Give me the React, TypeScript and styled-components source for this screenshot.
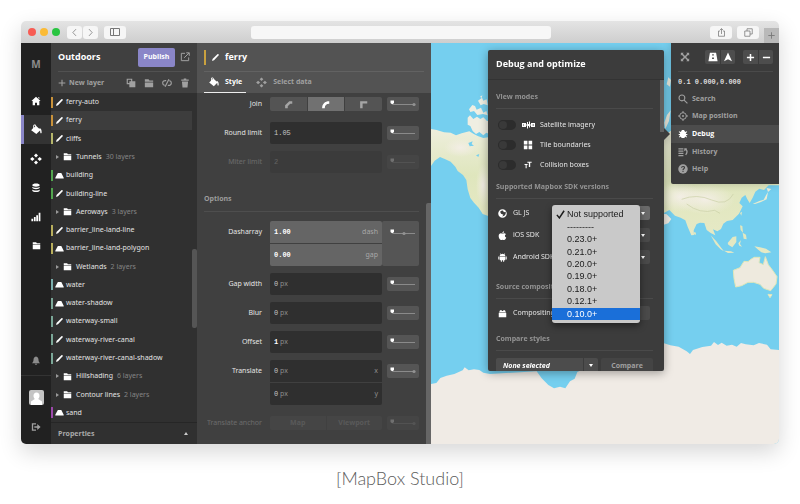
import React from "react";
import styled, { createGlobalStyle } from "styled-components";

const heading = '700 7px/10px "Open Sans", "Noto Sans", sans-serif';

const GlobalStyle = createGlobalStyle`
  * { box-sizing: border-box; }
  body {
    margin: 0;
    background: #fff;
    font: 7px/10px "Noto Sans", "Open Sans", sans-serif;
    color: #e4e4e4;
  }
  button, input, select { font: inherit; color: inherit; margin: 0; padding: 0; border: 0; background: none; }
  ul { list-style: none; margin: 0; padding: 0; }
  h1, h2, p, figure { margin: 0; padding: 0; font-weight: inherit; font-size: inherit; }
  svg { display: block; flex: none; }
`;

/* ---------- icons ---------- */

const icons: Record<string, React.ReactNode> = {
  line: <path d="M1.5 10.5 2 8 8.5 1.6Q10 1 10.6 2.8L4 9.8Z" />,
  polygon: <path d="M3.8 2.5h4.6L11.6 9v1H.4V9Z" />,
  folder: <path d="M1 1.5h4.5l1 1.5H11v1.5H1ZM1 5.3h10V11H1Z" />,
  home: <path d="M6 1 11.5 6H10v5H7.2V8H4.8v3H2V6H.5ZM8.6 1.5H10v2l-1.4-1Z" />,
  paint: <path fillRule="evenodd" d="M4 .5c1 0 1.7.7 1.7 1.6L9 5.3l.7-.6c1.5.6 2 2 1.9 4.8-.2 1-1.3.9-1.4 0L9.9 7 5.8 11 1 7.3.2 6.7l2.200-2.300V2.100C2.400 1.200 3 .5 4 .5Zm0 1c-.5 0-.7.3-.7.8v1.400L4.800 2.200c0-.4-.3-.7-.8-.7Z" />,
  data: <path d="M6 .6 8 2.500 6 4.400 4 2.500ZM6 7.600 8 9.500 6 11.400 4 9.500ZM2.300 4 4.500 6 2.300 8 .1 6ZM9.700 4l2.200 2-2.200 2-2.200-2Z" />,
  stack: <path d="M1.500 2.500C1.500 0 10.500 0 10.500 2.500S1.500 5 1.500 2.500ZM1.500 4.500c1.500 1.600 7.500 1.600 9 0v1C10 8 2 8 1.500 5.500ZM1.500 7.700c1.500 1.600 7.500 1.600 9 0v1.200c-.5 2.700-8.500 2.700-9 0Z" />,
  chart: <path d="M.5 8h2.100v3H.5ZM3.500 6h2.100v5H3.500ZM6.300 4h2.100v7H6.300ZM9.200 1h2.100v10H9.200Z" />,
  bell: <path d="M6 .6c2.200.4 3 2 3 4 0 2 .7 3 1.800 4H1.200C2.300 7.600 3 6.600 3 4.600c0-2 .8-3.600 3-4ZM4.500 9.300h3C7.300 11 4.700 11 4.500 9.300Z" />,
  logout: <path d="M1 1.500h5V3H2.600v6H6v1.500H1ZM7.500 2.500 11.500 6 7.500 9.500V7H4V5h3.500Z" />,
  external: <path fill="none" stroke="currentColor" strokeWidth="1.200" d="M6 1.600H1.600v8.800h8.800V6.500M7.500 1h3.600v3.600M11 1 5 7" />,
  plus: <path d="M5.200 1h1.600v4.200H11v1.600H6.800V11H5.200V6.800H1V5.200h4.200Z" />,
  boldPlus: <path d="M5 1.200h2V5h3.800v2H7v3.800H5V7H1.200V5H5Z" />,
  minus: <path d="M1.200 5h9.600v2H1.200Z" />,
  copy: <path fillRule="evenodd" d="M.8.8h6.700v3.200h3.700v7.200H4V7.500H.8ZM2.200 2.200v3.900H4V4h2.100V2.200Z" />,
  hide: <path fill="none" stroke="currentColor" strokeWidth="1.400" d="M5 3.200C2.600 2.800.8 4 .8 6c0 1.500 1 2.600 2.400 2.800M7 8.800C9.400 9.200 11.200 8 11.200 6c0-1.500-1-2.600-2.400-2.800M8.300 1.500 3.700 10.500" />,
  trash: <path d="M4.500.6h3v1.200h3v1.500h-9V1.800h3ZM2.300 4.100h7.400L9 11.400H3Z" />,
  close: <path d="M1 1h3.500L3.400 2.100 6 4.700l2.600-2.600L7.500 1H11v3.500L9.900 3.400 7.300 6l2.600 2.600L11 7.500V11H7.500l1.100-1.100L6 7.300 3.400 9.900 4.500 11H1V7.500l1.100 1.100L4.700 6 2.100 3.400 1 4.500Z" />,
  road: <path fillRule="evenodd" d="M2.300.8h7.400L11.500 11H.5ZM5 2.600v1.600h2V2.600ZM4.900 6.600v1.900h2.200V6.600Z" />,
  north: <path d="M6 .7 10.800 11 6 8.700 1.200 11Z" />,
  search: <g fill="none" stroke="currentColor" strokeWidth="1.300"><circle cx="4.700" cy="4.700" r="3.500" /><path d="m7.300 7.300 4 4" /></g>,
  target: <g fill="none" stroke="currentColor" strokeWidth="1.200"><circle cx="6" cy="6" r="4" /><path d="M6 0v2.400M6 9.600V12M0 6h2.400M9.600 6H12" /><circle cx="6" cy="6" r=".8" /></g>,
  bug: <path d="M4 2.600C4 .6 8 .6 8 2.600l1.200 1 1.300-.9.600 1-1.600 1.200v1.200h1.700v1H9.500l1.300 2.500-.9.600-1-1.200C8 11.500 4 11.500 3.100 9l-1 1.200-.9-.6 1.300-2.500H.8v-1h1.700V4.900L.9 3.700l.6-1 1.300.9Z" />,
  history: <path d="M.5 1.500h6V3h-6ZM.5 4.200h6v1.500h-6ZM.5 6.900h6v1.500h-6ZM.5 9.500h6V11h-6ZM7.500 1.500h3v1.300Q13 6 9.800 9.800L8.600 9q2.400-3 .8-5.200L7.500 5Z" />,
  help: <><circle cx="6" cy="6" r="5.700" /><path fill="none" stroke="#3d3d3d" strokeWidth="1.300" d="M4.200 4.600C4.300 2.300 7.900 2.500 7.800 4.500 7.700 5.800 6 5.600 6 7.200M6 8.100v1.400" /></>,
  tiles: <path d="M1 1h4.300v4.300H1ZM6.700 1H11v4.300H6.700ZM1 6.700h4.300V11H1ZM6.700 6.700H11V11H6.700Z" />,
  letters: <path d="M.8 4.600h4.600v1.500H4V11H2.400V6.100H.8ZM5 1h6.500v1.800H9.300V9H7.300V2.800H5Z" />,
  compass: <path fillRule="evenodd" d="M6 .3a5.700 5.700 0 1 0 0 11.400A5.700 5.700 0 1 0 6 .3ZM6.500 2l1.400 2.400 2.300-.6C11 7.500 8.500 10 5.500 10l1.800-2.400L4 6.200 2.800 3.600Q4.500 1.900 6.500 2Z" />,
  apple: <path d="M8.100.2C8.200 1.800 7 2.900 5.800 2.900 5.700 1.500 6.900.4 8.100.2ZM6 3.600c.8 0 1.300-.6 2.300-.6 1 0 1.800.5 2.300 1.200C8.500 5.500 8.900 8 11 8.800 10.300 10.700 9.300 11.900 8.300 11.900 7.500 11.900 7 11.500 6.100 11.500S4.700 11.900 3.900 11.900C2.200 11.700.8 8.800.9 6.500 1 4.400 2.300 3.100 3.900 3.100 4.800 3.100 5.400 3.600 6 3.600Z" />,
  android: <path d="m3 .4 1 1.100q2-.7 4 0L9 .4l.5.400-.8 1.100Q9.700 2.700 9.800 4H2.200Q2.300 2.700 3.300 1.900L2.500.8ZM2.400 4.600h7.200v5H8.200v2H6.800v-2H5.200v2H3.800v-2H2.400ZM.4 4.600h1.400v4H.4ZM10.200 4.600h1.400v4h-1.400Z" />,
  box: <path d="M2.500 1.500h2.600v1.200h1.800V1.500h2.600v1.200L11 4.700H1l1.500-2ZM1 5.400h10V11H1Z" />,
  left: <path fill="none" stroke="currentColor" d="M8 1.500 3.800 6 8 10.500" />,
  right: <path fill="none" stroke="currentColor" d="M4 1.500 8.200 6 4 10.500" />,
  share: <path fill="none" stroke="currentColor" d="M4 4H2v7h8V4H8M6 8V1M4 2.700 6 .8l2 1.900" />,
  tabs: <path fill="none" stroke="currentColor" d="M1 4h7v7H1ZM4 4V1h7v7H8" />,
  thinPlus: <path fill="none" stroke="currentColor" strokeWidth="1.500" d="M6 .5v11M.5 6h11" />,
  bevel: <path d="M1.500 11V7L7 1.500h4V5H8.300L5 8.300V11Z" />,
  round: <path d="M1.500 11C1.500 5 5 1.500 11 1.500V5C7 5 5 7 5 11Z" />,
  miter: <path d="M1.500 11V1.500H11V4.800H4.800V11Z" />,
  check: <path fill="none" stroke="currentColor" strokeWidth="2" d="m1.200 6.500 3.300 4L10.800 1" />,
};

const Svg = styled.svg<{ $size: number; $color?: string }>`
  width: ${(p) => p.$size}px;
  height: ${(p) => p.$size}px;
  color: ${(p) => p.$color ?? "inherit"};
  fill: currentColor;
`;
const Icon = ({ name, size = 10, color }: { name: string; size?: number; color?: string }) => (
  <Svg viewBox="0 0 12 12" $size={size} $color={color} aria-hidden="true">{icons[name]}</Svg>
);

/* ---------- window ---------- */

const Page = styled.figure`
  min-height: 100vh;
  display: flex;
  flex-direction: column;
  padding: 21px 21px 0;
`;
const Window = styled.main`
  flex: 1;
  display: flex;
  flex-direction: column;
  border-radius: 5px;
  overflow: hidden;
  box-shadow: 0 8px 22px rgba(0, 0, 0, 0.16);
`;
const TitleBar = styled.header`
  display: flex;
  align-items: center;
  height: 22px;
  padding-left: 7px;
  background: linear-gradient(#e4e4e4, #cecece);
  color: #777;
`;
const Light = styled.span<{ $color: string }>`
  width: 8px;
  height: 8px;
  margin-right: 4px;
  border-radius: 50%;
  background: ${(p) => p.$color};
`;
const ChromeButton = styled.button<{ $wide?: boolean }>`
  display: grid;
  place-items: center;
  width: ${(p) => (p.$wide ? 22 : 15)}px;
  height: 13px;
  border-radius: 3px;
  background: #f6f6f6;
`;
const ChromeGroup = styled.div<{ $gap: number }>`
  display: flex;
  gap: ${(p) => p.$gap}px;
  margin-left: 3px;
`;
const SidebarButton = styled(ChromeButton)`
  margin-left: 6px;
`;
const Address = styled.input`
  flex: 1;
  min-width: 0;
  height: 13px;
  margin: 0 156px 0 125px;
  border-radius: 3px;
  background: #f7f7f7;
`;
const NewTab = styled.button`
  display: grid;
  place-items: center;
  align-self: flex-end;
  width: 15px;
  height: 15px;
  margin-left: 5px;
  background: #b9b9b9;
`;
const Body = styled.div`
  flex: 1;
  display: grid;
  grid-template-columns: 30px 146px 234px minmax(0, 1fr);
`;
const Caption = styled.figcaption`
  height: 60px;
  padding-top: 21px;
  text-align: center;
  color: #5c5c5c;
  font: 300 18px/26px Lato, sans-serif;
`;

/* ---------- rail ---------- */

const Rail = styled.nav`
  display: flex;
  flex-direction: column;
  background: #212121;
`;
const Brand = styled.a`
  height: 43px;
  line-height: 43px;
  text-align: center;
  text-decoration: none;
  color: #8c8c8c;
  font-size: 10px;
  font-weight: 700;
`;
const RailButton = styled.button<{ $active?: boolean; $dim?: boolean }>`
  display: grid;
  place-items: center;
  height: 29px;
  padding-right: ${(p) => (p.$active ? 3 : 0)}px;
  border-left: ${(p) => (p.$active ? "3px solid #8a86c8" : "0")};
  background: ${(p) => (p.$active ? "#333" : "none")};
  color: ${(p) => (p.$dim ? "#8c8c8c" : "#fff")};
`;
const RailFoot = styled.div`
  display: grid;
  justify-items: center;
  align-content: start;
  gap: 17px;
  height: 69px;
  padding-top: 14px;
  border-top: 1px solid #333;
`;
const RailBell = styled(RailButton)`
  margin-top: auto;
`;
const AvatarBox = styled.svg`
  width: 15px;
  height: 15px;
  border-radius: 2px;
`;
const PlainButton = styled.button`
  display: grid;
  place-items: center;
  color: #a0a0a0;
`;

/* ---------- layers ---------- */

const Layers = styled.section`
  display: flex;
  flex-direction: column;
  background: #303030;
`;
const PanelHead = styled.div<{ $color: string }>`
  height: 50px;
  padding: 0 7px;
  background: ${(p) => p.$color};
`;
const HeadRow = styled.div<{ $last?: boolean }>`
  display: flex;
  align-items: center;
  gap: 5px;
  height: ${(p) => (p.$last ? 21 : 29)}px;
  border-bottom: ${(p) => (p.$last ? "0" : "1px solid rgba(255,255,255,.09)")};
`;
const Title = styled.h1`
  color: #fff;
  font: ${heading};
  font-size: 9px;
  line-height: 12px;
`;
const Publish = styled.button`
  height: 19px;
  width: 37px;
  margin-left: auto;
  border-radius: 2px;
  background: #8a86c8;
  color: #fff;
  font: ${heading};
`;
const NewLayer = styled.button`
  display: flex;
  align-items: center;
  gap: 3px;
  margin-right: auto;
  color: #a0a0a0;
  font: ${heading};
`;
const HeadTools = styled.div`
  display: flex;
  gap: 8px;
`;
const ListArea = styled.div`
  flex: 1;
  display: grid;
  grid-template-columns: 1fr 5px;
`;
const LayerList = styled.ul`
  display: grid;
  grid-auto-rows: 1fr;
`;
const LayerItem = styled.li`
  display: flex;
`;
const LayerButton = styled.button<{ $bar?: string; $active?: boolean }>`
  flex: 1;
  display: flex;
  align-items: center;
  gap: ${(p) => (p.$bar ? 2 : 4)}px;
  padding-left: ${(p) => (p.$bar ? 0 : 5)}px;
  white-space: nowrap;
  background: ${(p) => (p.$active ? "#3d3d3d" : "none")};
`;
const Bar = styled.span<{ $color: string; $tall?: boolean }>`
  flex: none;
  width: 2px;
  height: ${(p) => (p.$tall ? 15 : 11)}px;
  background: ${(p) => p.$color};
`;
const Muted = styled.span`
  color: #858585;
`;
const Triangle = styled.span<{ $dir: "right" | "down" | "up" }>`
  flex: none;
  width: 0;
  height: 0;
  border: 2px solid transparent;
  ${(p) =>
    p.$dir === "right"
      ? "border-left: 3px solid #999; border-right: 0;"
      : p.$dir === "down"
      ? "border-top: 3px solid #fff; border-bottom: 0;"
      : "border-bottom: 3px solid #ccc; border-top: 0;"}
`;
const LayerThumb = styled.span`
  align-self: end;
  height: 79px;
  margin-bottom: 94px;
  border-radius: 2px;
  background: #555;
`;
const Properties = styled.button`
  display: flex;
  align-items: center;
  justify-content: space-between;
  height: 22px;
  padding: 0 9px 0 7px;
  border-top: 1px solid #262626;
  color: #aaa;
  font: ${heading};
`;

/* ---------- style editor ---------- */

const Editor = styled.section`
  display: flex;
  flex-direction: column;
  background: #404040;
`;
const Tab = styled.button<{ $active?: boolean }>`
  display: flex;
  align-items: center;
  gap: 6px;
  height: 21px;
  padding: 0 4px 0 5px;
  border-bottom: 1px solid ${(p) => (p.$active ? "#eee" : "transparent")};
  color: ${(p) => (p.$active ? "#fff" : "#a0a0a0")};
  font: ${heading};
`;
const EditorArea = styled.div`
  flex: 1;
  display: grid;
  grid-template-columns: 1fr 5px;
`;
const EditorThumb = styled.span`
  margin-top: 110px;
  background: #666;
  border-radius: 2px 0 0 0;
`;
const Fields = styled.div`
  display: flex;
  flex-direction: column;
  gap: 7px;
  padding: 4px 7px 0;
`;
const Spacer = styled.div`
  height: 4px;
  margin-bottom: -7px;
`;
const FieldRow = styled.div<{ $faded?: boolean }>`
  display: grid;
  grid-template-columns: 61px 112px 32px;
  column-gap: 5px;
  opacity: ${(p) => (p.$faded ? 0.25 : 1)};
`;
const FieldLabel = styled.span<{ $short?: boolean }>`
  display: flex;
  justify-content: flex-end;
  padding-right: 3px;
  line-height: ${(p) => (p.$short ? 14 : 22)}px;
  white-space: nowrap;
`;
const Inputs = styled.div`
  display: grid;
  gap: 1px;
  border-radius: 2px;
  overflow: hidden;
`;
const ValueBox = styled.label<{ $light?: boolean }>`
  display: flex;
  align-items: center;
  height: 22px;
  padding: 0 4px;
  background: ${(p) => (p.$light ? "#656565" : "#2f2f2f")};
  color: ${(p) => (p.$light ? "#a8a8a8" : "#8c8c8c")};
`;
const ValueInput = styled.input<{ $chars: number; $bold?: boolean }>`
  width: ${(p) => (p.$chars > 1 ? 30 : 6)}px;
  height: 14px;
  color: ${(p) => (p.$bold ? "#fff" : "#c4c4c4")};
  font: ${(p) => (p.$bold ? 700 : 400)} 7px/14px "Liberation Mono", monospace;
`;
const Suffix = styled.span`
  margin-left: auto;
`;
const Segments = styled.div`
  display: grid;
  grid-auto-flow: column;
  grid-auto-columns: 1fr;
  gap: 1px;
  height: 14px;
  border-radius: 2px;
  overflow: hidden;
`;
const Segment = styled.button<{ $active?: boolean }>`
  display: grid;
  place-items: center;
  background: ${(p) => (p.$active ? "#717171" : "#545454")};
  color: ${(p) => (p.$active ? "#fff" : "#a5a5a5")};
  font: ${heading};
`;
const StopButton = styled.button<{ $offset?: boolean; $tall?: boolean }>`
  display: grid;
  justify-items: end;
  align-content: start;
  height: ${(p) => (p.$tall ? 45 : 14)}px;
  padding: ${(p) => (p.$tall ? 5 : 0)}px 3px 0 0;
  margin: ${(p) => (p.$offset ? "4px 0 0" : p.$tall ? "0 0 0 -5px" : "0")};
  border-radius: 2px;
  background: #555;
`;
const StopSvg = styled.svg`
  width: 26px;
  height: 14px;
`;
const SectionTitle = styled.h2`
  padding: 14px 0 7px;
  margin-bottom: 2px;
  border-bottom: 1px solid #4e4e4e;
  color: #9c9c9c;
  font: ${heading};
`;

const Stops = ({ label, kind, offset, tall }: { label: string; kind?: "end" | "mid"; offset?: boolean; tall?: boolean }) => (
  <StopButton aria-label={`${label} zoom function`} $offset={offset} $tall={tall}>
    <StopSvg viewBox="0 0 26 14">
      <path d="M3 7.500h22" stroke="#8a8a8a" />
      <path d="M.5 3.500h3.500v2.500L2.250 7.500.5 6Z" fill="#fff" />
      {kind && <circle cx={kind === "end" ? 24 : 14} cy="7.500" r="1.600" fill="#929292" />}
    </StopSvg>
  </StopButton>
);

type Value = { value: string; unit?: string; suffix?: string };
const NumberField = ({ label, values, faded, kind, light }: { label: string; values: Value[]; faded?: boolean; kind?: "end" | "mid"; light?: boolean }) => (
  <FieldRow $faded={faded}>
    <FieldLabel>{label}</FieldLabel>
    <Inputs>
      {values.map((v, i) => (
        <ValueBox key={i} $light={light}>
          <ValueInput aria-label={`${label} ${v.suffix ?? ""}`} defaultValue={v.value} $chars={v.value.length} $bold={light || v.value === "1"} disabled={faded} />
          {v.unit}
          {v.suffix && <Suffix>{v.suffix}</Suffix>}
        </ValueBox>
      ))}
    </Inputs>
    <Stops label={label} kind={kind} offset={!light} tall={light} />
  </FieldRow>
);

/* ---------- map ---------- */

const MapArea = styled.section`
  position: relative;
  overflow: hidden;
  background: #75cfef;
`;
const MapSvg = styled.svg`
  position: absolute;
  inset: 0;
  width: 100%;
  height: 100%;
`;
const Tools = styled.aside`
  position: absolute;
  top: 0;
  right: 0;
  width: 108px;
  padding-bottom: 6px;
  border-radius: 0 0 0 2px;
  background: #3b3b3b;
  box-shadow: 0 0 8px rgba(0, 0, 0, 0.2);
`;
const ToolRow = styled.div`
  display: flex;
  align-items: center;
  height: 29px;
  margin: 0 6px 5px 7px;
  padding-left: 2px;
  border-bottom: 1px solid #4a4a4a;
`;
const ToolPair = styled.div`
  display: grid;
  grid-template-columns: 15px 14px;
  gap: 1px;
  height: 14px;
  margin-left: auto;
  border-radius: 2px;
  overflow: hidden;
  & + & { margin-left: 8px; }
`;
const ToolButton = styled.button`
  display: grid;
  place-items: center;
  background: #4d4d4d;
  color: #fff;
`;
const Coords = styled.p`
  padding-left: 7px;
  color: #ddd;
  font: 700 7px/10px "Liberation Mono", monospace;
`;
const ToolList = styled.ul`
  display: grid;
  grid-template-rows: repeat(5, 1fr);
  height: 88px;
  margin-top: 3px;
`;
const ToolItem = styled.button<{ $active?: boolean }>`
  display: flex;
  align-items: center;
  gap: 4px;
  width: 100%;
  height: 100%;
  padding-left: 7px;
  background: ${(p) => (p.$active ? "#4c4c4c" : "none")};
  color: ${(p) => (p.$active ? "#fff" : "#a0a0a0")};
  font: ${heading};
`;

/* ---------- debug panel ---------- */

const Popover = styled.section`
  position: absolute;
  top: 7px;
  right: 115px;
  width: 176px;
  height: 321px;
  filter: drop-shadow(0 2px 5px rgba(0, 0, 0, 0.35));
  &::after {
    content: "";
    position: absolute;
    left: 100%;
    top: 78px;
    border: 6px solid transparent;
    border-left: 6px solid #3c3c3c;
    border-right: 0;
  }
`;
const PopoverBody = styled.div`
  height: 100%;
  overflow: hidden;
  border-radius: 2px;
  background: #3c3c3c;
`;
const PopoverTitle = styled.h1`
  height: 30px;
  padding-left: 8px;
  border-bottom: 1px solid #333;
  color: #fff;
  font: ${heading};
  font-size: 9px;
  line-height: 28px;
`;
const PopoverScroll = styled.div`
  display: grid;
  grid-template-columns: 1fr 4px;
`;
const PopoverThumb = styled.span`
  height: 52px;
  background: #606060;
`;
const PopoverContent = styled.div`
  padding: 12px 7px 0 8px;
`;
const Group = styled.h2<{ $gap: number }>`
  margin-top: ${(p) => p.$gap}px;
  padding-bottom: 6px;
  border-bottom: 1px solid #4a4a4a;
  color: #949494;
  font: ${heading};
`;
const Modes = styled.div`
  display: grid;
  gap: 2px;
  padding-top: 7px;
`;
const Mode = styled.label`
  display: grid;
  grid-template-columns: 18px 14px 1fr;
  align-items: center;
  justify-items: center;
  column-gap: 5px;
  height: 18px;
  padding-left: 2px;
`;
const ModeText = styled.span`
  justify-self: start;
`;
const Toggle = styled.input`
  appearance: none;
  display: flex;
  width: 18px;
  height: 10px;
  border-radius: 5px;
  background: #2c2c2c;
  &::before {
    content: "";
    width: 8px;
    height: 8px;
    margin: 1px;
    border-radius: 50%;
    background: #393939;
  }
`;
const Sdk = styled.label`
  display: grid;
  grid-template-columns: 9px 34px 1fr;
  align-items: center;
  column-gap: 6px;
  height: 22px;
  padding: 0 3px 0 2px;
  white-space: nowrap;
`;
const SelectWrap = styled.span<{ $light?: boolean }>`
  display: flex;
  align-items: center;
  height: 14px;
  margin-left: 4px;
  padding-right: 5px;
  border-radius: 2px;
  background: ${(p) => (p.$light ? "#6a6a6a" : "#4a4a4a")};
`;
const Select = styled.select`
  appearance: none;
  flex: 1;
  min-width: 0;
  height: 14px;
  padding-left: 7px;
`;
const SdkList = styled.div`
  position: relative;
  padding-top: 3px;
`;
const Menu = styled.ul`
  position: absolute;
  z-index: 2;
  top: 6px;
  left: 56px;
  width: 88px;
  height: 118px;
  display: grid;
  grid-auto-rows: 1fr;
  padding: 3px 0;
  border-radius: 3px;
  background: #c9c9c9;
  box-shadow: 0 3px 7px rgba(0, 0, 0, 0.45);
`;
const MenuItem = styled.li<{ $active?: boolean }>`
  display: grid;
  grid-template-columns: 9px 1fr;
  align-items: center;
  column-gap: 2px;
  padding-left: 4px;
  background: ${(p) => (p.$active ? "#1a6fd9" : "none")};
  color: ${(p) => (p.$active ? "#fff" : "#1b1b1b")};
  font: 9px/12px "Liberation Sans", sans-serif;
`;
const CompareRow = styled.div`
  display: grid;
  grid-template-columns: 1fr 52px;
  gap: 3px;
  padding-top: 7px;
`;
const StyleSelect = styled.label`
  display: flex;
  align-items: center;
  height: 15px;
  padding-right: 5px;
  border-radius: 2px;
  background: linear-gradient(90deg, #4c4c4c 87px, #3c3c3c 87px 88px, #4c4c4c 88px);
  color: #fff;
  font: ${heading};
  font-style: italic;
`;
const Compare = styled.button`
  height: 15px;
  border-radius: 2px;
  background: #444;
  color: #a0a0a0;
  font: ${heading};
`;

/* ---------- content ---------- */

type Layer = { name: string; bar?: string; icon?: string; count?: string; active?: boolean };
const layers: Layer[] = [
  { name: "ferry-auto", bar: "#c9923a", icon: "line" },
  { name: "ferry", bar: "#c9923a", icon: "line", active: true },
  { name: "cliffs", bar: "#b5b56a", icon: "line" },
  { name: "Tunnels", count: "30 layers" },
  { name: "building", bar: "#52a54e", icon: "polygon" },
  { name: "building-line", bar: "#52a54e", icon: "line" },
  { name: "Aeroways", count: "3 layers" },
  { name: "barrier_line-land-line", bar: "#b8ae5c", icon: "line" },
  { name: "barrier_line-land-polygon", bar: "#b8ae5c", icon: "polygon" },
  { name: "Wetlands", count: "2 layers" },
  { name: "water", bar: "#7aaeac", icon: "polygon" },
  { name: "water-shadow", bar: "#7ba797", icon: "polygon" },
  { name: "waterway-small", bar: "#7ba797", icon: "line" },
  { name: "waterway-river-canal", bar: "#7ba797", icon: "line" },
  { name: "waterway-river-canal-shadow", bar: "#7ba797", icon: "line" },
  { name: "Hillshading", count: "6 layers" },
  { name: "Contour lines", count: "2 layers" },
  { name: "sand", bar: "#9c48aa", icon: "polygon" },
];
const tools = [
  ["search", "Search"],
  ["target", "Map position"],
  ["bug", "Debug"],
  ["history", "History"],
  ["help", "Help"],
];
const versions = ["Not supported", "---------", "0.23.0+", "0.21.0+", "0.20.0+", "0.19.0+", "0.18.0+", "0.12.1+", "0.10.0+"];
const sdks = [
  ["compass", "GL JS"],
  ["apple", "iOS SDK"],
  ["android", "Android SDK"],
];

const WideSvg = styled.svg`
  width: 13px;
  height: 8px;
  fill: #fff;
`;
const SatelliteIcon = () => (
  <WideSvg viewBox="0 0 26 16" aria-hidden="true">
    <path fillRule="evenodd" d="M0 4h8v3h2V2h2v4h2V1h2v6h2V4h8v8h-8V9h-2v4h-2v-3h-2v5h-2V9H8v3H0ZM2 6v1h2V6ZM2 9v1h2V9ZM21 6v1h3V6ZM21 9v1h3V9Z" />
  </WideSvg>
);
const SidebarSvg = styled.svg`
  width: 10px;
  height: 8px;
`;

const WorldMap = () => (
  <MapSvg viewBox="33 9 1044 1203" preserveAspectRatio="xMinYMin slice" aria-label="World map" role="img">
    <defs>
      <linearGradient id="land" x1="0" y1="0" x2="0" y2="1">
        <stop offset="0" stopColor="#eeeedc" />
        <stop offset=".5" stopColor="#dfe6bd" />
        <stop offset="1" stopColor="#e6e9c5" />
      </linearGradient>
      <radialGradient id="dry">
        <stop offset="0" stopColor="#f3eee5" />
        <stop offset="1" stopColor="#f3eee5" stopOpacity="0" />
      </radialGradient>
    </defs>
    <g fill="url(#land)">
      <path d="M33 267 50 270 72 277 92 278 108 286 125 280 148 274 160 281 173 288 190 294 215 290V545L203 527 188 522 176 503 162 488 151 474 143 448 139 420 129 405 113 393 106 380 92 365 76 358 60 351 44 362 33 378Z" />
      <path d="M143 233 150 226 160 237 171 230 181 237 190 232 201 243 215 244V285L199 278 190 286 178 276 168 282 158 273 151 258 143 254Z" fill="#efeee2" />
      <path d="M147 208 157 195 165 198 170 209 183 203 190 218 199 213 203 226 189 222 172 225 162 213 151 216ZM174 182l12-9 4 9 10-4 3 18-12-4-9 4ZM180 170l7-4-2 8Z" fill="#efeee2" />
      <path d="M720 305 742 280 770 260 1020 260 1077 300V436L1046 436 1032 450 1018 446 1006 455 998 473 989 489 982 478 976 465 965 473 958 489 968 499 957 521 938 540 921 543 910 551 903 567 892 574 879 568 886 586 872 579 860 570 853 549 840 548 830 552 821 571 822 585 814 586 803 560 796 541 782 533 765 527 748 510 733 518 720 512Z" />
      <path d="M720 520 740 523 754 537 745 550 720 558Z" fill="#f0ece3" />
      <path d="M733 248 741 225 752 211 747 243 736 267ZM740 133l5-21 8 8-3 20Z" fill="#efefe2" />
      <path d="M872 586 889 604 904 624 912 634 902 628 887 613ZM912 632 933 634 943 638 924 639ZM923 609 938 591 949 589 949 606 937 622 925 614ZM955 610l8-10-3 12 6 8-8-3ZM960 556l7 2 2 20-7-8ZM968 578l10 6 2 14-9-2ZM1003 619l17 3 18 4 16 11-18 3-12-3-11-9ZM998 492l20-9 13-4 7-13 6-10-4-12 14 3-10 9-4 22-17 8-18 6ZM822 576l6 2-1 7-5-2ZM960 519l6-4-2 12Z" />
      <path d="M940 691 960 683 972 664 984 665 994 657 1003 652 1020 652 1017 668 1030 674 1036 650 1045 674 1060 694 1071 710 1068 732 1052 752 1031 745 1020 733 1001 727 984 727 965 737 947 741 942 716ZM1044 763l12 1-6 9Z" fill="#eeeade" stroke="#e0e7b9" strokeWidth="3" />
    </g>
    <g fill="url(#dry)">
      <ellipse cx="122" cy="323" rx="50" ry="28" />
      <ellipse cx="780" cy="470" rx="65" ry="45" />
      <ellipse cx="855" cy="478" rx="90" ry="45" />
      <ellipse cx="190" cy="435" rx="22" ry="65" />
    </g>
    <path d="M145 309l13-5-3 8 7 5-13 2ZM168 346l10-4-3 9Z" fill="#75cfef" />
    <path d="M785 478Q830 460 875 480T940 462M800 492Q840 523 884 511L900 520" fill="none" stroke="#c8cea4" strokeWidth="2" />
    <path d="M33 1032 49 1029 61 1014 80 1007 103 1002 128 991 134 982 146 991 162 988 178 990 190 998 210 1002 350 994 365 1015 385 1035 402 1045 420 1040 436 1045 450 1024 464 1016 472 996 550 960 650 910 732 910 751 916 776 920 800 934 810 942 819 930 847 921 873 917 882 906 894 915 905 908 920 917 936 914 950 920 963 909 977 913 1001 916 1017 909 1041 914 1052 928 1077 930V1212H33Z" fill="#f0ebe5" />
  </MapSvg>
);

export default function App() {
  return (
    <Page>
      <GlobalStyle />
      <Window>
        <TitleBar>
          <Light $color="#f75c54" />
          <Light $color="#fbbb36" />
          <Light $color="#29c541" />
          <ChromeGroup $gap={1}>
            <ChromeButton aria-label="Back"><Icon name="left" size={9} /></ChromeButton>
            <ChromeButton aria-label="Forward"><Icon name="right" size={9} /></ChromeButton>
          </ChromeGroup>
          <SidebarButton $wide aria-label="Sidebar">
            <SidebarSvg viewBox="0 0 10 8"><path d="M.5.5h9v7h-9ZM3.500.5v7" fill="none" stroke="#777" /></SidebarSvg>
          </SidebarButton>
          <Address aria-label="Address" />
          <ChromeGroup $gap={5}>
            <ChromeButton $wide aria-label="Share"><Icon name="share" size={9} /></ChromeButton>
            <ChromeButton $wide aria-label="Tabs"><Icon name="tabs" size={9} /></ChromeButton>
          </ChromeGroup>
          <NewTab aria-label="New tab"><Icon name="thinPlus" size={7} /></NewTab>
        </TitleBar>

        <Body>
          <Rail>
            <Brand href="#home">M</Brand>
            <RailButton aria-label="Home"><Icon name="home" /></RailButton>
            <RailButton $active aria-label="Styles"><Icon name="paint" size={11} /></RailButton>
            <RailButton aria-label="Data"><Icon name="data" size={12} /></RailButton>
            <RailButton aria-label="Tilesets"><Icon name="stack" /></RailButton>
            <RailButton aria-label="Statistics"><Icon name="chart" /></RailButton>
            <RailButton aria-label="Projects"><Icon name="folder" size={9} /></RailButton>
            <RailBell $dim aria-label="Notifications"><Icon name="bell" /></RailBell>
            <RailFoot>
              <PlainButton aria-label="Account">
                <AvatarBox viewBox="0 0 15 15">
                  <path d="M0 0h15v15H0Z" fill="#c4c4c4" />
                  <path d="M7.500 2.500c2 0 3 1.500 3 3.300 0 1.400-.6 2.300-1.300 3.200L13 11.500V15H2v-3.500L5.800 9C5 8.200 4.500 7.200 4.500 5.800c0-1.800 1-3.300 3-3.300Z" fill="#fff" />
                </AvatarBox>
              </PlainButton>
              <PlainButton aria-label="Sign out"><Icon name="logout" /></PlainButton>
            </RailFoot>
          </Rail>

          <Layers>
            <PanelHead $color="#404040">
              <HeadRow>
                <Title>Outdoors</Title>
                <Publish>Publish</Publish>
                <PlainButton aria-label="Open preview"><Icon name="external" /></PlainButton>
              </HeadRow>
              <HeadRow $last>
                <NewLayer><Icon name="plus" size={8} />New layer</NewLayer>
                <HeadTools>
                  <PlainButton aria-label="Duplicate"><Icon name="copy" /></PlainButton>
                  <PlainButton aria-label="Group"><Icon name="folder" /></PlainButton>
                  <PlainButton aria-label="Hide"><Icon name="hide" /></PlainButton>
                  <PlainButton aria-label="Delete"><Icon name="trash" /></PlainButton>
                </HeadTools>
              </HeadRow>
            </PanelHead>
            <ListArea>
              <LayerList>
                {layers.map((l) => (
                  <LayerItem key={l.name}>
                    <LayerButton $bar={l.bar} $active={l.active}>
                      {l.bar ? <Bar $color={l.bar} /> : <Triangle $dir="right" />}
                      <Icon name={l.icon ?? "folder"} size={9} color="#fff" />
                      {l.name}
                      {l.count && <Muted>{l.count}</Muted>}
                    </LayerButton>
                  </LayerItem>
                ))}
              </LayerList>
              <LayerThumb />
            </ListArea>
            <Properties>Properties<Triangle $dir="up" /></Properties>
          </Layers>

          <Editor>
            <PanelHead $color="#535353">
              <HeadRow>
                <Bar $color="#c9a13f" $tall />
                <Icon name="line" size={9} color="#fff" />
                <Title>ferry</Title>
              </HeadRow>
              <HeadRow $last>
                <Tab $active><Icon name="paint" />Style</Tab>
                <Tab><Icon name="data" size={11} />Select data</Tab>
              </HeadRow>
            </PanelHead>
            <EditorArea>
              <Fields>
                <FieldRow>
                  <FieldLabel $short>Join</FieldLabel>
                  <Segments>
                    <Segment aria-label="Bevel"><Icon name="bevel" size={9} /></Segment>
                    <Segment $active aria-label="Round"><Icon name="round" size={9} /></Segment>
                    <Segment aria-label="Miter"><Icon name="miter" size={9} /></Segment>
                  </Segments>
                  <Stops label="Join" kind="end" />
                </FieldRow>
                <Spacer />
                <NumberField label="Round limit" values={[{ value: "1.05" }]} />
                <NumberField label="Miter limit" values={[{ value: "2" }]} faded />
                <SectionTitle>Options</SectionTitle>
                <NumberField label="Dasharray" values={[{ value: "1.00", suffix: "dash" }, { value: "0.00", suffix: "gap" }]} kind="mid" light />
                <NumberField label="Gap width" values={[{ value: "0", unit: "px" }]} />
                <NumberField label="Blur" values={[{ value: "0", unit: "px" }]} />
                <NumberField label="Offset" values={[{ value: "1", unit: "px" }]} />
                <NumberField label="Translate" values={[{ value: "0", unit: "px", suffix: "x" }, { value: "0", unit: "px", suffix: "y" }]} kind="end" />
                <Spacer />
                <FieldRow $faded>
                  <FieldLabel $short>Translate anchor</FieldLabel>
                  <Segments>
                    <Segment disabled>Map</Segment>
                    <Segment disabled>Viewport</Segment>
                  </Segments>
                  <Stops label="Translate anchor" kind="end" />
                </FieldRow>
              </Fields>
              <EditorThumb />
            </EditorArea>
          </Editor>

          <MapArea>
            <WorldMap />
            <Tools>
              <ToolRow>
                <PlainButton aria-label="Fullscreen"><Icon name="close" /></PlainButton>
                <ToolPair>
                  <ToolButton aria-label="Pitch"><Icon name="road" /></ToolButton>
                  <ToolButton aria-label="North"><Icon name="north" /></ToolButton>
                </ToolPair>
                <ToolPair>
                  <ToolButton aria-label="Zoom in"><Icon name="boldPlus" size={9} /></ToolButton>
                  <ToolButton aria-label="Zoom out"><Icon name="minus" size={9} /></ToolButton>
                </ToolPair>
              </ToolRow>
              <Coords>0.1 0.000,0.000</Coords>
              <ToolList>
                {tools.map(([icon, label]) => (
                  <li key={label}>
                    <ToolItem $active={label === "Debug"}><Icon name={icon} />{label}</ToolItem>
                  </li>
                ))}
              </ToolList>
            </Tools>

            <Popover>
              <PopoverBody>
                <PopoverTitle>Debug and optimize</PopoverTitle>
                <PopoverScroll>
                  <PopoverContent>
                    <Group $gap={0}>View modes</Group>
                    <Modes>
                      <Mode><Toggle type="checkbox" /><SatelliteIcon /><ModeText>Satellite imagery</ModeText></Mode>
                      <Mode><Toggle type="checkbox" /><Icon name="tiles" color="#fff" /><ModeText>Tile boundaries</ModeText></Mode>
                      <Mode><Toggle type="checkbox" /><Icon name="letters" size={8} color="#fff" /><ModeText>Collision boxes</ModeText></Mode>
                    </Modes>
                    <Group $gap={8}>Supported Mapbox SDK versions</Group>
                    <SdkList>
                      {sdks.map(([icon, label], i) => (
                        <Sdk key={label}>
                          <Icon name={icon} size={9} color="#fff" />
                          <span>{label}</span>
                          <SelectWrap $light={i === 0}>
                            <Select defaultValue=""><option value="" /></Select>
                            <Triangle $dir="down" />
                          </SelectWrap>
                        </Sdk>
                      ))}
                      <Menu role="listbox" aria-label="GL JS version">
                        {versions.map((v, i) => (
                          <MenuItem key={v} role="option" aria-selected={i === 0} $active={i === versions.length - 1}>
                            {i === 0 ? <Icon name="check" size={9} /> : <span />}
                            {v}
                          </MenuItem>
                        ))}
                      </Menu>
                    </SdkList>
                    <Group $gap={14}>Source compositing</Group>
                    <SdkList>
                      <Sdk>
                        <Icon name="box" size={9} color="#fff" />
                        <span>Compositing</span>
                        <SelectWrap><Select defaultValue=""><option value="" /></Select></SelectWrap>
                      </Sdk>
                    </SdkList>
                    <Group $gap={10}>Compare styles</Group>
                    <CompareRow>
                      <StyleSelect>
                        <Select aria-label="Style to compare"><option>None selected</option></Select>
                        <Triangle $dir="down" />
                      </StyleSelect>
                      <Compare>Compare</Compare>
                    </CompareRow>
                  </PopoverContent>
                  <PopoverThumb />
                </PopoverScroll>
              </PopoverBody>
            </Popover>
          </MapArea>
        </Body>
      </Window>
      <Caption>[MapBox Studio]</Caption>
    </Page>
  );
}
